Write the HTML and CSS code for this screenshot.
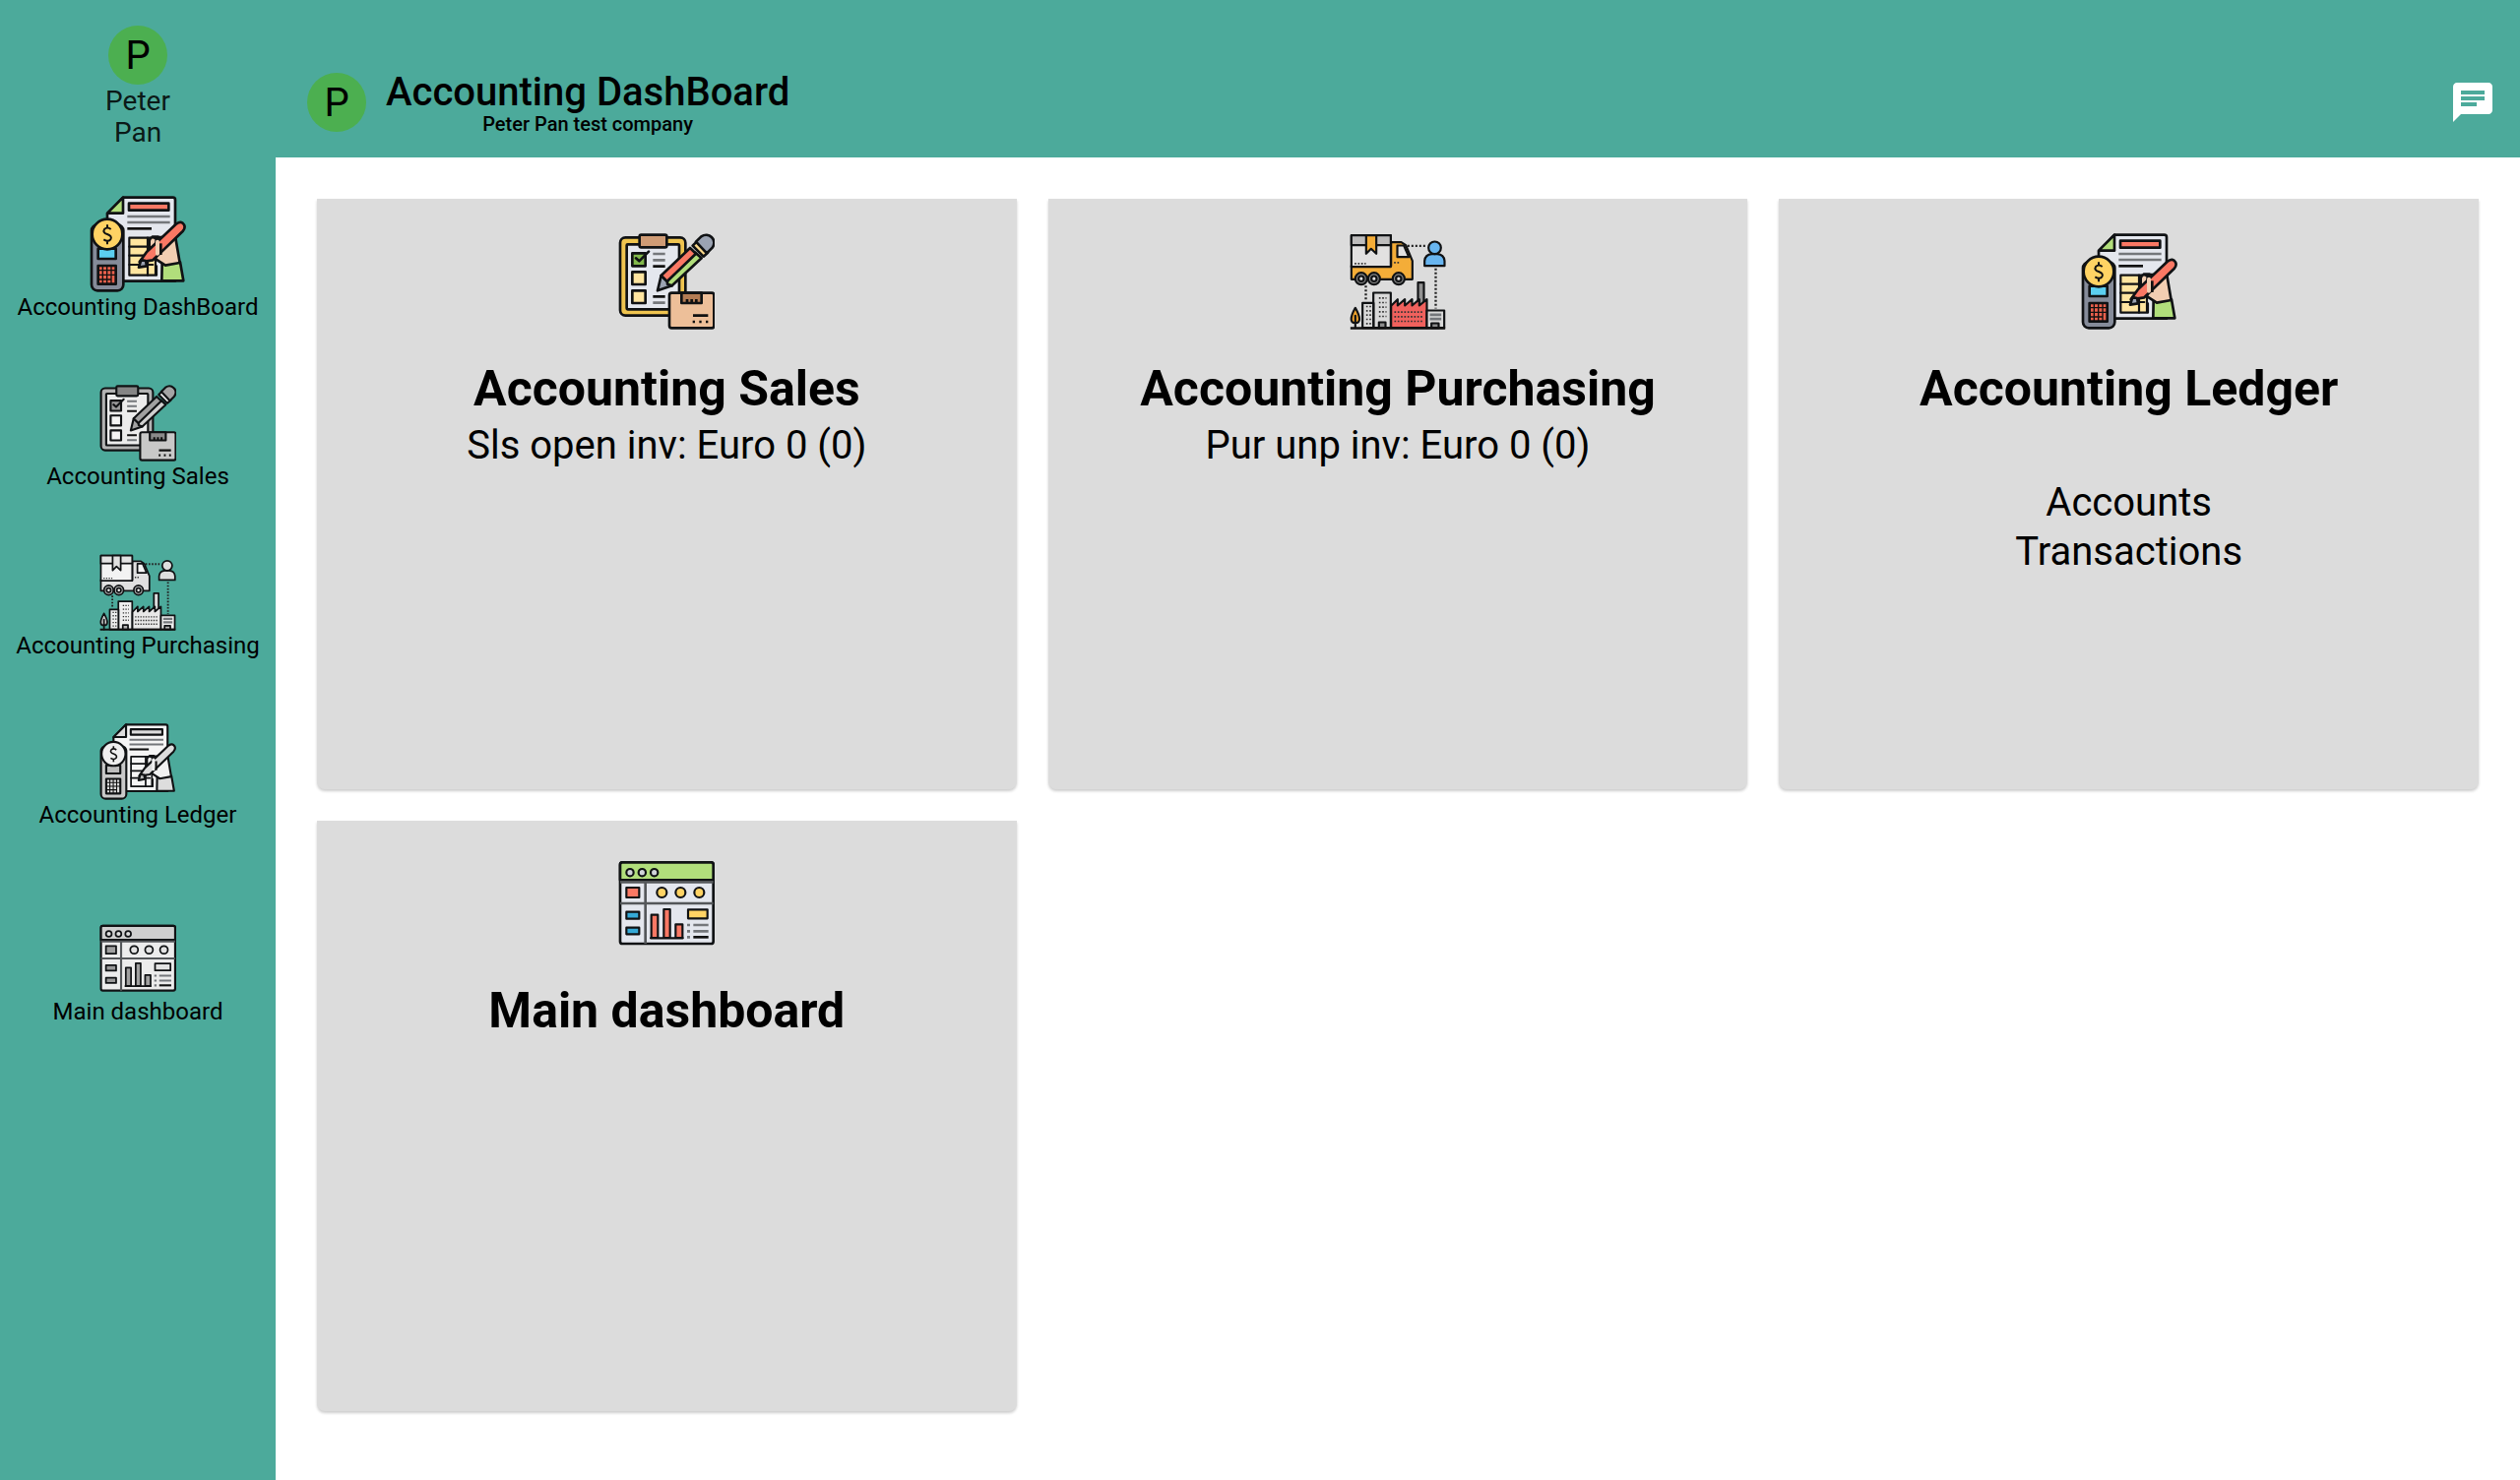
FILE: index.html
```html
<!DOCTYPE html>
<html lang="en">
<head>
<meta charset="utf-8">
<title>Accounting DashBoard</title>
<link rel="stylesheet" href="styles.css">
</head>
<body>
<svg class="sprite" aria-hidden="true">
  <symbol id="sales" viewBox="54 36 294 294">
    <g class="ln">
      <rect class="c-gold" x="60" y="49" width="199" height="238" rx="16"/>
      <rect class="c-paper" x="80" y="70" width="160" height="198" rx="3"/>
      <rect class="c-clip" x="119" y="41" width="83" height="38" rx="5"/>
      <rect class="c-check" x="97" y="97" width="40" height="39"/>
      <rect class="c-cream" x="97" y="154" width="40" height="38"/>
      <rect class="c-cream" x="97" y="211" width="40" height="38"/>
      <path d="M108 112l10 9 29-29" fill="none"/>
    </g>
    <path class="soft" d="M160 99h37M160 118h37M160 248h37"/>
    <path class="dark" d="M160 137h37M160 229h37"/>
    <g class="ln">
      <path class="c-steel" d="M174 211l11-46 33 31z"/>
      <path class="c-green" d="M204 180l85-85 19 17-90 84-14-5z"/>
      <path class="c-red" d="M185 165l88-84 18 17-88 85z"/>
      <path class="c-band" d="M281 74l33 33 13-12-33-34z"/>
      <path class="c-steel" d="M291 62l16-16c23-15 50 9 34 34l-17 17z"/>
      <rect class="c-box" x="210" y="218" width="136" height="107" rx="7"/>
      <path class="c-tape" d="M247 218h61v31h-61z"/>
    </g>
    <path class="dark" d="M264 247v-10M278 247v-10M292 247v-10M282 287h46M281 306h7M301 306h7M321 306h7"/>
  </symbol>

  <symbol id="purchasing" viewBox="34.5 34.5 294 294">
    <path class="dots" d="M211 73h54M297 142v122M84 194v48"/>
    <g class="ln thin">
      <path class="c-truck" d="M40 134h121V62h31l14 9 20 48v56H40z"/>
      <path class="c-load" d="M40 41h120v96H40z"/>
      <path class="c-lid" d="M40 41h120v30H40z"/>
      <path class="c-truck" d="M85 41h31v56l-16-15-15 15z"/>
      <path class="c-load" d="M180 107V72h20l15 35z"/>
      <circle class="c-tyre" cx="70" cy="173" r="18"/><circle class="c-tyre" cx="109" cy="173" r="18"/><circle class="c-tyre" cx="184" cy="173" r="18"/>
      <circle class="c-hub" cx="70" cy="173" r="8"/><circle class="c-hub" cx="109" cy="173" r="8"/><circle class="c-hub" cx="184" cy="173" r="8"/>
      <path class="c-user" d="M263 134v-15q2-20 22-21h17q20 1 22 21v15z"/>
      <circle class="c-user" cx="294" cy="79" r="19"/>
      <path class="c-tree" d="M52 262q-25 45 0 46 25-1 0-46zM52 286v37"/>
      <path class="c-wall" d="M74 323v-76h34v76zM107 323V216h53v107z"/>
      <path class="c-stack" d="M243 265v-80h18v80z"/>
      <path class="c-plant" d="M161 323v-67l20-20v19l22-19v19l22-19v19l22-19v19l23-19v87z"/>
      <path class="c-wall" d="M270 323v-53h53v53z"/>
      <path class="c-tyre" d="M124 323v-17h20v17zM284 323v-14h22v14z"/>
    </g>
    <path class="dark" d="M37 324h289"/>
    <path class="dots fine" d="M50 127h34M170 124h18M124 232h23M124 246h23M124 260h23M124 274h23M124 288h23M85 258h16M85 271h16M85 284h16M85 297h16M85 310h16M171 275h85M171 289h85M171 303h85"/>
    <path class="soft" d="M279 283h35M279 296h35"/>
  </symbol>

  <symbol id="ledger" viewBox="40 36 294 294">
    <g class="ln">
      <path class="c-paper" d="M94 91l48-50h152q7 0 7 7v248H94z"/>
      <path class="c-green" d="M94 89l48-48v48z"/>
      <path class="c-red" d="M160 59h121v21H160z"/>
    </g>
    <path class="soft" d="M155 99h130M155 117h130"/>
    <path class="dark" d="M155 136h74"/>
    <g class="ln thin">
      <path class="c-cream" d="M161 164h80v114h-80z"/>
      <path d="M161 191h62M161 218h50M161 246h72M217 164v114M244 250v28" fill="none"/>
    </g>
    <g class="ln">
      <rect class="c-phone" x="46" y="124" width="97" height="201" rx="18"/>
      <path class="c-screen" d="M66 197h54v31H66z"/>
      <path class="c-keys" d="M66 249h54v56H66z"/>
      <circle class="c-coin" cx="94" cy="153" r="46"/>
      <path class="c-green" d="M261 242l55-4 10 57h-66z"/>
      <path class="c-skin" d="M243 168q-15-13-21 5v22l18-4 10-30h-18l70 3 13 76-44 8-29-19z"/>
      <path class="c-red" d="M192 238l22-31 91-86q15-10 23 3 5 10-4 20l-91 88z"/>
      <path class="c-steel" d="M190 254l7-23 14 3 3 16z"/>
    </g>
    <path class="skin-line" d="M247 176v36"/>
    <path class="dark" d="M257 181v35"/>
    <path class="thinline" d="M80 249v56M93 249v56M106 249v56M66 263h54M66 277h54M66 291h40"/>
    <path class="dollar" d="M105 138q-11-9-20 0-6 10 9 15 16 6 10 16-8 9-21 0M94 124v10M94 174v10"/>
  </symbol>

  <symbol id="board" viewBox="39 27 294 294">
    <g class="ln">
      <rect class="c-paper" x="45" y="49" width="284" height="248" rx="7"/>
      <path class="c-green" d="M45 103V56q0-7 7-7h270q7 0 7 7v47z"/>
    </g>
    <path class="divide" d="M45 109h284M45 174h284M122 109v188"/>
    <g class="ln thin">
      <circle class="c-dot" cx="75" cy="80" r="11"/><circle class="c-dot" cx="112" cy="80" r="11"/><circle class="c-dot" cx="149" cy="80" r="11"/>
      <circle class="c-coin" cx="172" cy="141" r="15"/><circle class="c-coin" cx="229" cy="141" r="15"/><circle class="c-coin" cx="286" cy="141" r="15"/>
      <path class="c-red" d="M64 126h39v30H64z"/>
      <path class="c-blue" d="M64 200h39v21H64zM64 248h39v20H64z"/>
      <path class="c-red" d="M140 209h20v70h-20zM178 192h19v87h-19zM214 238h21v41h-21z"/>
      <path d="M138 280h98" fill="none"/>
      <path class="c-coin" d="M252 193h59v27h-59z"/>
    </g>
    <path class="soft" d="M249 240h9M268 240h46M249 259h9M268 259h46M249 277h9"/>
    <path class="dark" d="M268 277h46"/>
  </symbol>
</svg>

<div class="app">
  <nav class="rail">
    <div class="user">
      <span class="avatar">P</span>
      <span class="name">Peter<br>Pan</span>
    </div>
    <a class="item active"><svg class="icon"><use href="#ledger"/></svg><span>Accounting DashBoard</span></a>
    <a class="item mono"><svg class="icon"><use href="#sales"/></svg><span>Accounting Sales</span></a>
    <a class="item mono pale"><svg class="icon"><use href="#purchasing"/></svg><span>Accounting Purchasing</span></a>
    <a class="item mono pale"><svg class="icon"><use href="#ledger"/></svg><span>Accounting Ledger</span></a>
    <a class="item mono last"><svg class="icon"><use href="#board"/></svg><span>Main dashboard</span></a>
  </nav>
  <div class="page">
    <header class="bar">
      <span class="avatar">P</span>
      <div class="heading">
        <h1>Accounting DashBoard</h1>
        <p>Peter Pan test company</p>
      </div>
      <svg class="chat" viewBox="0 0 24 24"><path d="M20 2H4c-1.1 0-1.99.9-1.99 2L2 22l4-4h14c1.1 0 2-.9 2-2V4c0-1.1-.9-2-2-2zM6 9h12v2H6V9zm8 5H6v-2h8v2zm4-6H6V6h12v2z"/></svg>
    </header>
    <main class="grid">
      <section class="card"><svg class="icon"><use href="#sales"/></svg><h2>Accounting Sales</h2><p>Sls open inv: Euro 0 (0)</p></section>
      <section class="card"><svg class="icon"><use href="#purchasing"/></svg><h2>Accounting Purchasing</h2><p>Pur unp inv: Euro 0 (0)</p></section>
      <section class="card"><svg class="icon"><use href="#ledger"/></svg><h2>Accounting Ledger</h2><ul><li>Accounts</li><li>Transactions</li></ul></section>
      <section class="card"><svg class="icon"><use href="#board"/></svg><h2>Main dashboard</h2></section>
    </main>
  </div>
</div>
</body>
</html>
```
FILE: styles.css
```css
* { box-sizing: border-box; margin: 0; padding: 0; }

:root {
  --gold: #efc44f; --paper: #e4e7ee; --clip: #cf9b75; --check: #82b94c; --cream: #ffe5a0;
  --steel: #9ba3b2; --green: #b1de7b; --red: #fa7864; --band: #fbd98c; --box: #edbf99; --tape: #b37c54;
  --truck: #f4ad38; --load: #e2e1e1; --lid: #bdbcbc; --tyre: #8b8b8b; --user: #68b5f0; --tree: #f4a52c;
  --wall: #dadada; --plant: #f0615d; --stack: #929292; --phone: #858b99; --screen: #5bcff0;
  --keys: #e9604c; --coin: #ffd364; --skin: #f2ceb2; --blue: #35a9d7; --dot: #d0d4d9;
}

body {
  width: 2560px;
  height: 1504px;
  overflow: hidden;
  background: #fff;
  color: #000;
  font-family: Roboto, "Liberation Sans", sans-serif;
}

.sprite { display: none; }
.app { display: flex; height: 1504px; }

.rail {
  display: flex;
  flex-direction: column;
  align-items: center;
  flex: 0 0 280px;
  padding-top: 26px;
  background: #4caa9b;
}
.user { display: flex; flex-direction: column; align-items: center; height: 173px; }
.avatar {
  width: 60px;
  height: 60px;
  border-radius: 50%;
  background: #4caf50;
  font-size: 40px;
  line-height: 62px;
  text-align: center;
}
.name {
  margin-top: 1px;
  color: rgba(0, 0, 0, .87);
  font-size: 28px;
  line-height: 32px;
  text-align: center;
}
.item {
  display: flex;
  flex-direction: column;
  align-items: center;
  height: 172px;
  font-size: 24px;
  line-height: 30px;
  white-space: nowrap;
}
.item .icon { width: 78px; height: 78px; }
.item.active { height: 192px; }
.item.active .icon { width: 98px; height: 98px; }
.item.last { margin-top: 28px; }

.icon { filter: blur(.45px); }

.mono {
  --gold: #b3b3b3; --paper: #ececec; --clip: #858585; --check: #9b9b9b; --cream: #f4f4f4;
  --steel: #a4a4a4; --green: #cfcfcf; --red: #a0a0a0; --band: #eee; --box: #c8c8c8; --tape: #8a8a8a;
  --coin: #e3e3e3; --blue: #999; --dot: #ddd;
}
.pale {
  --paper: #f5f5f5; --cream: #f5f5f5; --steel: #bbb; --green: #ddd; --red: #dcdcdc;
  --truck: #e0e0e0; --load: #f3f3f3; --lid: #e3e3e3; --tyre: #b5b5b5; --user: #dedede; --tree: #d0d0d0;
  --wall: #eee; --plant: #e8e8e8; --stack: #ddd; --phone: #c9c9c9; --screen: #bebebe;
  --keys: #ddd; --coin: #efefef; --skin: #f1f1f1;
}

.page { flex: 1; display: flex; flex-direction: column; }
.bar {
  display: flex;
  align-items: flex-start;
  height: 160px;
  padding: 74px 24px 0 32px;
  background: #4caa9b;
}
.heading { margin: -4px auto 0 20px; text-align: center; }
h1 { font-size: 40px; font-weight: 500; line-height: 48px; }
.heading p { font-size: 20px; font-weight: 500; line-height: 24px; margin-top: -4px; }
.chat { width: 48px; height: 48px; margin-top: 6px; fill: #fff; }

.grid {
  display: grid;
  grid-template-columns: repeat(3, 1fr);
  grid-auto-rows: 600px;
  gap: 32px;
  padding: 42px 42px 0;
}
.card {
  display: flex;
  flex-direction: column;
  align-items: center;
  padding-top: 35px;
  border-radius: 0 0 8px 8px;
  background: #dcdcdc;
  box-shadow: 0 2px 3px rgba(0, 0, 0, .2);
}
.card .icon { width: 98px; height: 98px; }
h2 { margin-top: 31px; font-size: 50px; font-weight: 700; line-height: 58px; }
.card p { margin-top: 6px; font-size: 40px; line-height: 46px; }
.card ul { margin-top: 62px; list-style: none; text-align: center; font-size: 40px; line-height: 50px; }

/* icon strokes */
.ln { stroke: #101214; stroke-width: 8; stroke-linejoin: round; stroke-linecap: round; }
.ln.thin { stroke-width: 6.5; }
.soft, .dark, .divide, .dots, .thinline, .dollar, .skin-line { fill: none; stroke: #111; stroke-width: 8; }
.soft { stroke: #74777b; }
.divide { stroke: #54575a; }
.dots { stroke: #222; stroke-width: 7; stroke-dasharray: 6 6; }
.dots.fine { stroke: #333; stroke-width: 5; stroke-dasharray: 5 5; }
.thinline { stroke-width: 4; }
.dollar { stroke-width: 6; }
.skin-line { stroke: var(--skin); stroke-width: 12; stroke-linecap: round; }

/* icon fills */
.c-gold { fill: var(--gold); }
.c-paper { fill: var(--paper); }
.c-clip { fill: var(--clip); }
.c-check { fill: var(--check); }
.c-cream { fill: var(--cream); }
.c-steel { fill: var(--steel); }
.c-green { fill: var(--green); }
.c-red { fill: var(--red); }
.c-band { fill: var(--band); }
.c-box { fill: var(--box); }
.c-tape { fill: var(--tape); }
.c-truck { fill: var(--truck); }
.c-load { fill: var(--load); }
.c-lid { fill: var(--lid); }
.c-tyre { fill: var(--tyre); }
.c-hub { fill: var(--load); }
.c-user { fill: var(--user); }
.c-tree { fill: var(--tree); }
.c-wall { fill: var(--wall); }
.c-plant { fill: var(--plant); }
.c-stack { fill: var(--stack); }
.c-phone { fill: var(--phone); }
.c-screen { fill: var(--screen); }
.c-keys { fill: var(--keys); }
.c-coin { fill: var(--coin); }
.c-skin { fill: var(--skin); }
.c-blue { fill: var(--blue); }
.c-dot { fill: var(--dot); }
```
